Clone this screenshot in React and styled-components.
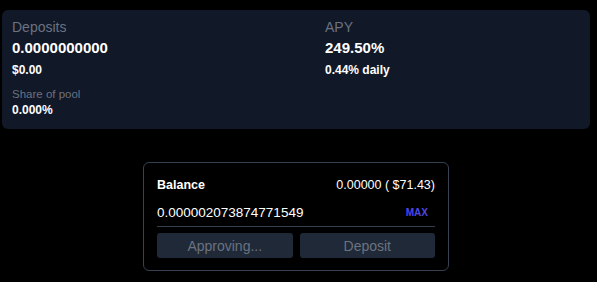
import React from 'react';
import styled, { createGlobalStyle } from 'styled-components';

const GlobalStyle = createGlobalStyle`
  body {
    margin: 0;
    background: #000;
    font-family: "Liberation Sans", Arial, sans-serif;
    color: #fff;
  }
`;

const Page = styled.div`
  width: 588px;
  margin-left: 2px;
  padding-top: 10px;
  display: flex;
  flex-direction: column;
  align-items: center;
`;

const StatsCard = styled.div`
  box-sizing: border-box;
  width: 100%;
  height: 119px;
  background: #111827;
  border-radius: 6px;
  padding: 7px 10px;
  display: grid;
  grid-template-columns: 313px 1fr;
`;

const Stat = styled.div`
  display: flex;
  flex-direction: column;
`;

const Label = styled.div`
  color: #6b7280;
  font-size: ${(p) => (p.small ? '11.5px' : '14px')};
  line-height: ${(p) => (p.small ? '15px' : '20px')};
  margin-top: ${(p) => (p.small ? '9px' : '0')};
`;

const BigValue = styled.div`
  font-size: 15px;
  font-weight: 700;
  line-height: 22px;
`;

const SmallValue = styled.div`
  font-size: 12px;
  font-weight: 700;
  line-height: 16px;
  margin-top: ${(p) => (p.tight ? '0' : '3px')};
`;

const DepositBox = styled.div`
  box-sizing: border-box;
  width: 306px;
  margin-top: 33px;
  border: 1px solid #374151;
  border-radius: 6px;
  padding: 12px 13px;
  display: flex;
  flex-direction: column;
`;

const Row = styled.div`
  display: flex;
  justify-content: space-between;
  align-items: center;
  font-size: 12.5px;
  line-height: 18px;
  height: 20px;
  margin-bottom: 8px;
`;

const BalanceLabel = styled.span`
  font-weight: 700;
`;

const InputRow = styled(Row)`
  font-size: 13.5px;
  border-bottom: 1px solid #374151;
  padding-bottom: 3px;
  margin-bottom: 6px;
`;

const MaxButton = styled.span`
  color: #4f46e5;
  font-size: 10px;
  font-weight: 700;
  padding-right: 7px;
`;

const Buttons = styled.div`
  display: grid;
  grid-template-columns: 1fr 1fr;
  gap: 7px;
`;

const Button = styled.button`
  height: 25px;
  border: none;
  border-radius: 3px;
  background: #1f2937;
  color: #6b7280;
  font-family: "Liberation Sans", Arial, sans-serif;
  font-size: 14px;
  padding: 0;
`;

export default function App() {
  return (
    <>
      <GlobalStyle />
      <Page>
        <StatsCard>
          <Stat>
            <Label>Deposits</Label>
            <BigValue>0.0000000000</BigValue>
            <SmallValue>$0.00</SmallValue>
            <Label small>Share of pool</Label>
            <SmallValue tight>0.000%</SmallValue>
          </Stat>
          <Stat>
            <Label>APY</Label>
            <BigValue>249.50%</BigValue>
            <SmallValue>0.44% daily</SmallValue>
          </Stat>
        </StatsCard>
        <DepositBox>
          <Row>
            <BalanceLabel>Balance</BalanceLabel>
            <span>0.00000 ( $71.43)</span>
          </Row>
          <InputRow>
            <span>0.000002073874771549</span>
            <MaxButton>MAX</MaxButton>
          </InputRow>
          <Buttons>
            <Button disabled>Approving...</Button>
            <Button disabled>Deposit</Button>
          </Buttons>
        </DepositBox>
      </Page>
    </>
  );
}
